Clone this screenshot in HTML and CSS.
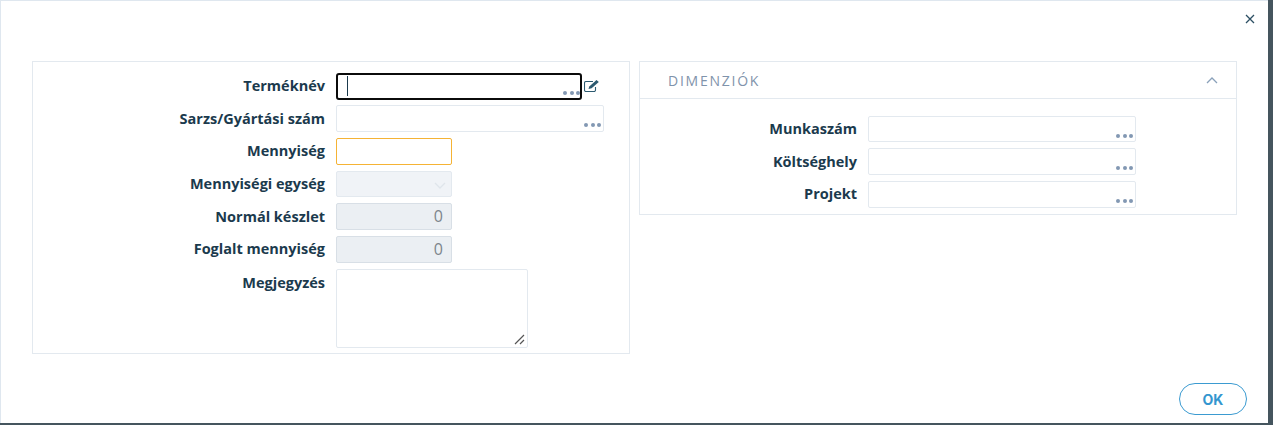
FILE: index.html
```html
<!DOCTYPE html>
<html lang="hu">
<head>
    <meta charset="UTF-8">
    <title>Termék</title>
    <link rel="stylesheet" href="styles.css">
</head>
<body>
    <div class="dialog">
        <button class="close" aria-label="Bezárás">
            <svg width="10" height="10" viewBox="0 0 10 10"><path d="M1 1l8 8M9 1l-8 8"/></svg>
        </button>
        <div class="columns">
            <div class="panel panel-main">
                <div class="row">
                    <label>Terméknév</label>
                    <div class="field field-focus"><span class="caret"></span><span class="dots"><i></i><i></i><i></i></span></div>
                    <svg class="edit" width="16" height="14" viewBox="0 0 16 14">
                        <path class="edit-box" d="M9 2.500H2a1.500 1.500 0 0 0-1.500 1.500v7a1.500 1.500 0 0 0 1.500 1.500h8a1.500 1.500 0 0 0 1.500-1.500V8"/>
                        <path class="edit-pen" d="M4.500 10l.8-2.600L12.500 1l2.300 2-7.200 6.200z"/>
                    </svg>
                </div>
                <div class="row">
                    <label>Sarzs/Gyártási szám</label>
                    <div class="field field-wide"><span class="dots"><i></i><i></i><i></i></span></div>
                </div>
                <div class="row">
                    <label>Mennyiség</label>
                    <div class="field field-short field-required"></div>
                </div>
                <div class="row">
                    <label>Mennyiségi egység</label>
                    <div class="field field-short field-select">
                        <svg width="12" height="7" viewBox="0 0 12 7"><path d="M1 1l5 5 5-5"/></svg>
                    </div>
                </div>
                <div class="row">
                    <label>Normál készlet</label>
                    <div class="field field-short field-disabled">0</div>
                </div>
                <div class="row">
                    <label>Foglalt mennyiség</label>
                    <div class="field field-short field-disabled">0</div>
                </div>
                <div class="row row-note">
                    <label>Megjegyzés</label>
                    <div class="field field-note">
                        <svg width="11" height="11" viewBox="0 0 11 11"><path d="M1 10l9-9M6 10l4-4"/></svg>
                    </div>
                </div>
            </div>
            <div class="panel panel-side">
                <div class="panel-head">
                    <span>DIMENZIÓK</span>
                    <svg width="12" height="7" viewBox="0 0 12 7"><path d="M1 6l5-5 5 5"/></svg>
                </div>
                <div class="panel-body">
                    <div class="row">
                        <label>Munkaszám</label>
                        <div class="field"><span class="dots"><i></i><i></i><i></i></span></div>
                    </div>
                    <div class="row">
                        <label>Költséghely</label>
                        <div class="field"><span class="dots"><i></i><i></i><i></i></span></div>
                    </div>
                    <div class="row">
                        <label>Projekt</label>
                        <div class="field"><span class="dots"><i></i><i></i><i></i></span></div>
                    </div>
                </div>
            </div>
        </div>
        <div class="footer">
            <button class="ok">OK</button>
        </div>
    </div>
</body>
</html>
```

FILE: styles.css
```css
html, body {
    margin: 0;
    height: 100%;
}
body {
    background: #45555e;
    font-family: "Open Sans", sans-serif;
    overflow: hidden;
}
.dialog {
    position: relative;
    box-sizing: border-box;
    width: 1268px;
    height: 423px;
    background: white;
    border-top: 1px solid #dfe7ef;
    border-left: 1px solid #dfe7ef;
    padding: 60px 31px 0 31px;
    display: flex;
    flex-direction: column;
}
.close {
    position: absolute;
    top: 13px;
    right: 13px;
    width: 10px;
    height: 10px;
    padding: 0;
    border: none;
    background: none;
    display: flex;
}
.close path {
    stroke: #2c4f63;
    stroke-width: 1.3;
    fill: none;
}
.columns {
    display: flex;
    align-items: flex-start;
    gap: 9px;
}
.panel {
    box-sizing: border-box;
    width: 598px;
    border: 1px solid #e3e9ef;
}
.panel-main {
    height: 293px;
    padding: 10.670px 0 0 0;
}
.panel-side {
    height: 154px;
}
.panel-head {
    box-sizing: border-box;
    height: 37px;
    border-bottom: 1px solid #e3e9ef;
    padding: 0 18px 0 28px;
    display: flex;
    align-items: center;
    justify-content: space-between;
    color: #7f93ab;
    font-size: 14px;
    letter-spacing: 1.750px;
}
.panel-head path {
    stroke: #8aa1ba;
    stroke-width: 1.3;
    fill: none;
}
.panel-body {
    padding: 16.670px 0 0 0;
}
.panel-body .row label {
    width: 217px;
}
.panel-body .field {
    width: 268px;
}
.row {
    display: flex;
    align-items: center;
    height: 26.670px;
    margin-bottom: 6px;
}
.row label {
    box-sizing: border-box;
    width: 292px;
    margin-right: 11px;
    margin-top: -1px;
    text-align: right;
    color: #1b3a4d;
    font-size: 14.500px;
    font-weight: 700;
}
.field {
    position: relative;
    box-sizing: border-box;
    height: 26.670px;
    width: 268px;
    border: 1px solid #e3e9ef;
    border-radius: 2px;
    background: white;
}
.field-focus {
    align-self: flex-start;
    width: 246px;
    height: 27px;
    border: 2px solid #0b0b0b;
    border-radius: 3px;
    margin-right: 2px;
}
.field-wide {
    width: 268px;
}
.field-short {
    width: 116px;
}
.field-required {
    border-color: #f5b335;
}
.field-select {
    background: #f0f3f7;
}
.field-select svg {
    position: absolute;
    right: 5px;
    top: 10px;
}
.field-select path {
    stroke: #dfe5eb;
    stroke-width: 1.3;
    fill: none;
}
.field-disabled {
    background: #ebeff3;
    border-color: #d8dfe6;
    color: #7d858c;
    font-size: 16px;
    line-height: 25px;
    text-align: right;
    padding-right: 8px;
}
.row-note {
    align-items: flex-start;
}
.row-note label {
    line-height: 27px;
    margin-top: 0;
}
.field-note {
    width: 192px;
    height: 79px;
}
.field-note svg {
    position: absolute;
    right: 2px;
    bottom: 2px;
}
.field-note path {
    stroke: #555;
    stroke-width: 1.200;
    fill: none;
}
.caret {
    position: absolute;
    left: 9px;
    top: 1px;
    width: 1px;
    height: 20px;
    background: #1b3a4d;
}
.dots {
    position: absolute;
    right: 2px;
    bottom: 3.700px;
    display: flex;
    gap: 2.400px;
}
.field-focus .dots {
    right: 0;
    bottom: 2.700px;
}
.dots i {
    width: 4px;
    height: 4px;
    border-radius: 50%;
    background: #8298b3;
}
.edit {
    flex: none;
}
.edit-box {
    fill: none;
    stroke: #2c5a70;
    stroke-width: 1.100;
}
.edit-pen {
    fill: #2c5a70;
}
.footer {
    margin-top: auto;
    display: flex;
    justify-content: flex-end;
    padding: 0 21px 8px 0;
    margin-right: -31px;
}
.ok {
    box-sizing: border-box;
    width: 68px;
    height: 32px;
    border: 1px solid #3b9bd1;
    border-radius: 16px;
    background: white;
    color: #3496cf;
    font-family: Inter, sans-serif;
    font-size: 14px;
    font-weight: 700;
    padding: 0;
}
```
